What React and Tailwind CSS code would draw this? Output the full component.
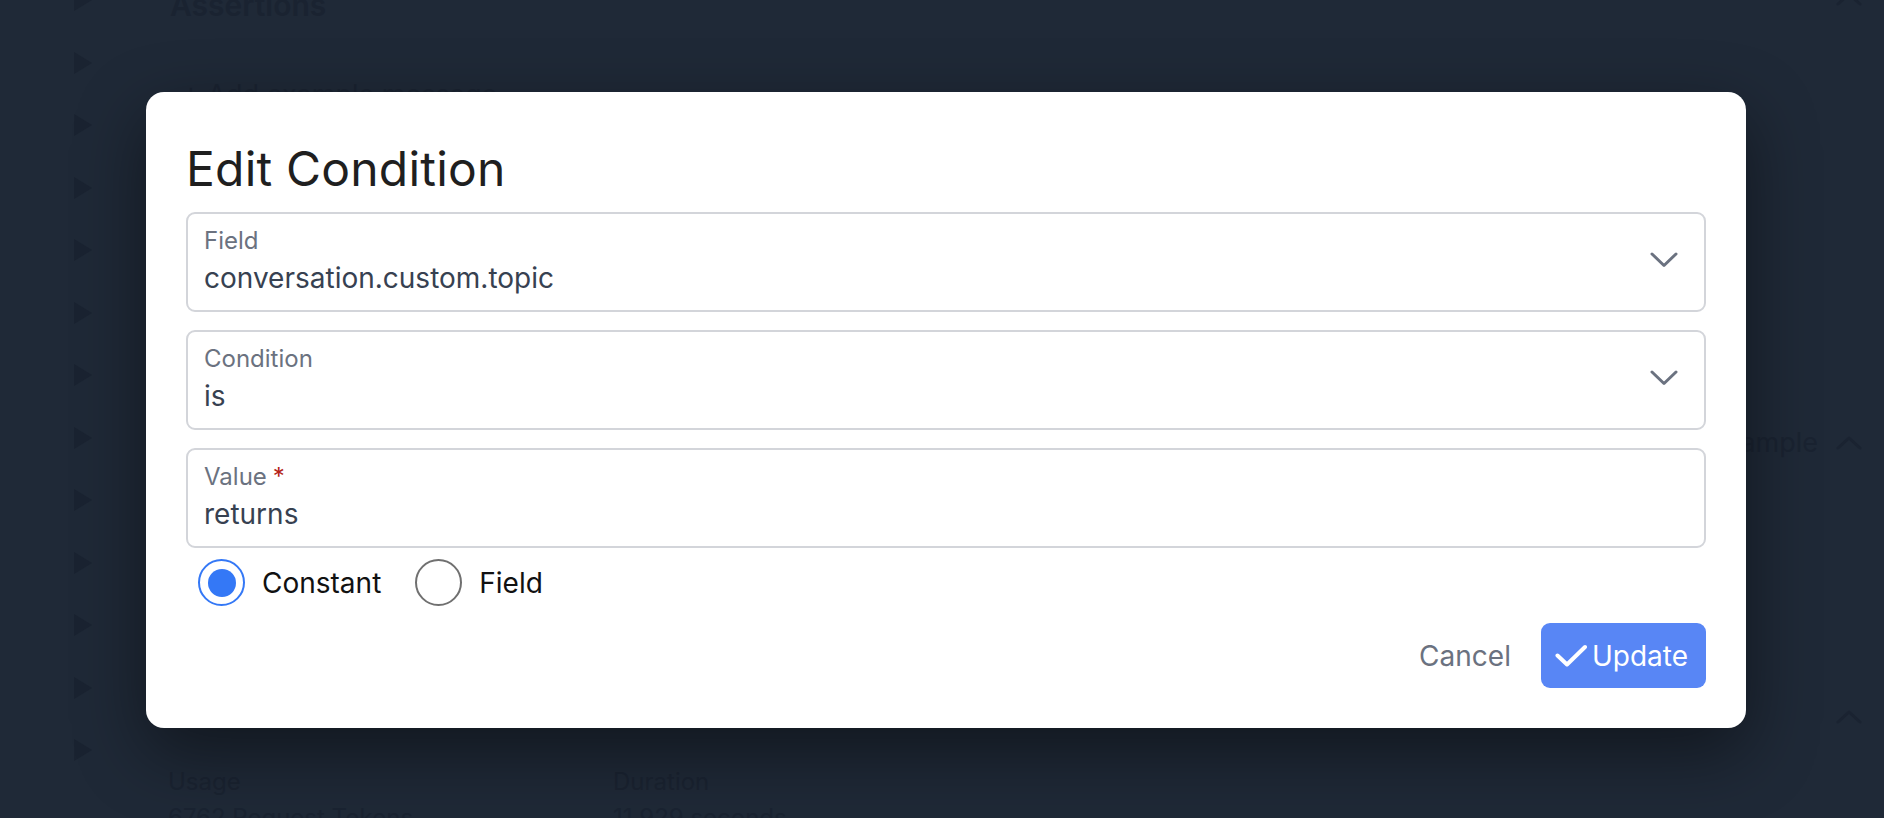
import { useState } from "react"

const font = { fontFamily: "Inter, 'Noto Sans', sans-serif" }

const ChevronDown = () => (
  <svg width="28" height="16" viewBox="0 0 28 16" fill="none">
    <polyline points="2,2 14,13.5 26,2" stroke="#6b7280" strokeWidth="3" strokeLinecap="round" strokeLinejoin="round" />
  </svg>
)

const ChevronUp = () => (
  <svg width="26" height="14" viewBox="0 0 26 14" fill="none">
    <polyline points="2,12 13,2 24,12" stroke="#1a2331" strokeWidth="3" strokeLinecap="round" strokeLinejoin="round" />
  </svg>
)

const CheckIcon = () => (
  <svg width="32" height="24" viewBox="0 0 32 24" fill="none">
    <polyline points="2.5,11.5 12,20.5 30,3" stroke="#ffffff" strokeWidth="4" strokeLinecap="round" strokeLinejoin="round" />
  </svg>
)

const Triangle = () => (
  <svg width="20" height="24" viewBox="0 0 20 24">
    <path d="M1 1 L19 12 L1 23 Z" fill="#1a2331" />
  </svg>
)

// Select-like box with floating label
const FieldBox = ({ label, value, required, select }) => (
  <div className="h-[100px] border-2 border-[#d3d5da] rounded-[9px] flex items-center pl-4 pr-[26px]">
    <div className="flex-1 flex flex-col mb-[1px]">
      <span className="text-[24px] leading-[32px] text-[#6b7280]">
        {label}
        {required && <span className="text-[#b42318] ml-[6px]">*</span>}
      </span>
      <span className="text-[28px] leading-[42px] text-[#374151]">{value}</span>
    </div>
    {select && (
      <div className="mb-[5px]">
        <ChevronDown />
      </div>
    )}
  </div>
)

const Radio = ({ checked, label, onClick }) => (
  <button onClick={onClick} className="flex items-center gap-[17px]">
    {checked ? (
      <span className="w-[47px] h-[47px] rounded-full border-2 border-[#3478f6] flex items-center justify-center">
        <span className="w-[28px] h-[28px] rounded-full bg-[#3478f6]" />
      </span>
    ) : (
      <span className="w-[47px] h-[47px] rounded-full border-2 border-[#707070]" />
    )}
    <span className="text-[28px] text-[#111111]">{label}</span>
  </button>
)

const App = () => {
  const [mode, setMode] = useState("constant")

  return (
    <div className="relative w-full h-[818px] overflow-hidden bg-[#1f2937]" style={font}>
      {/* Page behind the overlay */}
      <div className="flex h-full">
        <div className="w-[168px] pl-[73px] flex flex-col gap-[38.5px] -mt-[12px]">
          {Array.from({ length: 13 }).map((_, i) => (
            <Triangle key={i} />
          ))}
        </div>
        <div className="flex-1 flex flex-col">
          <div className="text-[30px] font-semibold text-[#1a2331] leading-none -mt-[10px] pl-[2px]">Assertions</div>
          <div className="text-[27px] text-[#1a2331] mt-[55px] pl-[14px]">+ Add example message</div>
          <div className="flex-1" />
          <div className="flex -mb-[4px]">
            <div className="w-[445px] flex flex-col">
              <span className="text-[24px] text-[#1a2331]">Usage</span>
              <span className="text-[24px] text-[#1a2331] -mb-[14px]">6762 Request Tokens</span>
            </div>
            <div className="flex flex-col">
              <span className="text-[24px] text-[#1a2331]">Duration</span>
              <span className="text-[24px] text-[#1a2331] -mb-[14px]">11.929 seconds</span>
            </div>
          </div>
        </div>
        <div className="w-[140px] flex flex-col items-end pr-[22px]">
          <div className="-mt-[8px]">
            <ChevronUp />
          </div>
          <div className="mt-[417px] flex items-center gap-[18px]">
            <span className="text-[27px] text-[#1a2331]">ample</span>
            <ChevronUp />
          </div>
          <div className="mt-[246px]">
            <ChevronUp />
          </div>
        </div>
      </div>

      {/* Overlay + dialog */}
      <div className="absolute inset-0 flex items-center justify-center pl-2 pt-[2px]">
        <div className="w-[1600px] h-[636px] bg-white rounded-[18px] shadow-[0_24px_70px_rgba(0,0,0,0.45)] px-10 pt-[53px] pb-10 flex flex-col">
          <h2 className="text-5xl leading-none tracking-[0.2px] text-[#1f1f1f] mb-[19px]">Edit Condition</h2>

          <div className="flex flex-col gap-[18px]">
            <FieldBox label="Field" value="conversation.custom.topic" select />
            <FieldBox label="Condition" value="is" select />
            <FieldBox label="Value" value="returns" required />
          </div>

          <div className="flex items-center gap-[34px] ml-3 mt-[11px]">
            <Radio label="Constant" checked={mode === "constant"} onClick={() => setMode("constant")} />
            <Radio label="Field" checked={mode === "field"} onClick={() => setMode("field")} />
          </div>

          <div className="flex justify-end items-center gap-[30px] mt-[17px]">
            <button className="text-[28px] text-[#6b7280]">Cancel</button>
            <button className="h-[65px] flex items-center gap-[5px] pl-[14px] pr-[18px] rounded-[9px] bg-[#5886f5] text-white text-[28px]">
              <CheckIcon />
              Update
            </button>
          </div>
        </div>
      </div>
    </div>
  )
}

export default App
